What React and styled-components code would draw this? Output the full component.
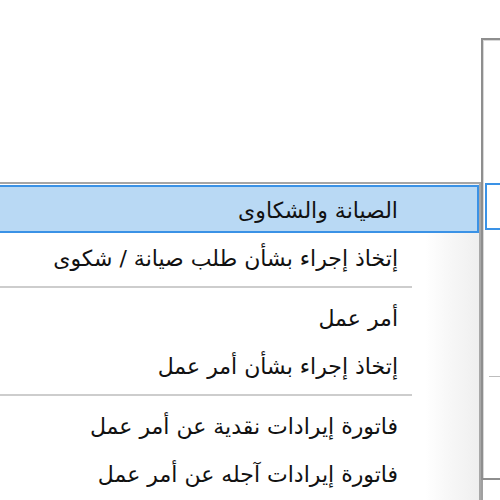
import React from "react";
import styled, { createGlobalStyle } from "styled-components";

const GlobalStyle = createGlobalStyle`
  html, body {
    margin: 0;
    padding: 0;
    background: #ffffff;
  }
  body {
    font-family: "DejaVu Sans", "Noto Sans", sans-serif;
  }
`;

const Screen = styled.div`
  display: flex;
  width: 500px;
  height: 500px;
  overflow: hidden;
  background: #ffffff;
`;

const MenuColumn = styled.div`
  flex: 0 0 481px;
  padding-top: 182px;
  box-sizing: border-box;
`;

const Menu = styled.ul`
  list-style: none;
  margin: 0 0 0 -20px;
  padding: 1px 0 0 0;
  border-top: 2px solid #a6a6a6;
  border-right: 2px solid #a8a8a8;
  background: linear-gradient(
    to right,
    #ffffff 0,
    #ffffff 445px,
    #f7f7f7 470px,
    #efefef 499px
  );
  direction: rtl;
  height: 320px;
`;

const Item = styled.li`
  box-sizing: border-box;
  height: 48px;
  margin-left: 2px;
  padding: 3px 79px 0 0;
  display: flex;
  align-items: center;
  font-size: 22px;
  color: #111;
  white-space: nowrap;
  background: ${props => (props.active ? "#b9d9f4" : "transparent")};
  border: 2px solid ${props => (props.active ? "#3a92e6" : "transparent")};
`;

const Separator = styled.li`
  height: 12px;
  display: flex;
  align-items: center;
  margin-right: 67px;
  &::before {
    content: "";
    flex: 1;
    height: 2px;
    background: #cdcdcd;
  }
`;

const PanelColumn = styled.div`
  flex: 1;
  padding-top: 38px;
  display: flex;
  flex-direction: column;
`;

const Panel = styled.div`
  box-sizing: border-box;
  height: 442px;
  border-top: 2px solid #8e8e8e;
  border-left: 2px solid #8e8e8e;
  border-bottom: 2px solid #8e8e8e;
  box-shadow: inset 1px 1px 0 #d8d8d8;
  padding-top: 143px;
  display: flex;
  flex-direction: column;
`;

const PanelSelection = styled.div`
  height: 47px;
  margin-left: 2px;
  box-sizing: border-box;
  border: 2px solid #3a92e6;
  border-right: none;
  background: #ffffff;
`;

const PanelRule = styled.div`
  margin: 146px 0 0 6px;
  height: 1px;
  background: #bdbdbd;
`;

const LowerPanel = styled.div`
  flex: 1;
  border-left: 2px solid #a0a0a0;
  background: #ffffff;
`;

const items = [
  { label: "الصيانة والشكاوى", active: true },
  { label: "إتخاذ إجراء بشأن طلب صيانة / شكوى" },
  { separator: true },
  { label: "أمر عمل" },
  { label: "إتخاذ إجراء بشأن أمر عمل" },
  { separator: true },
  { label: "فاتورة إيرادات نقدية عن أمر عمل" },
  { label: "فاتورة إيرادات آجله عن أمر عمل" }
];

export default function App() {
  return (
    <>
      <GlobalStyle />
      <Screen>
        <MenuColumn>
          <Menu>
            {items.map((item, i) =>
              item.separator ? (
                <Separator key={i} />
              ) : (
                <Item key={i} active={item.active}>
                  {item.label}
                </Item>
              )
            )}
          </Menu>
        </MenuColumn>
        <PanelColumn>
          <Panel>
            <PanelSelection />
            <PanelRule />
          </Panel>
          <LowerPanel />
        </PanelColumn>
      </Screen>
    </>
  );
}
